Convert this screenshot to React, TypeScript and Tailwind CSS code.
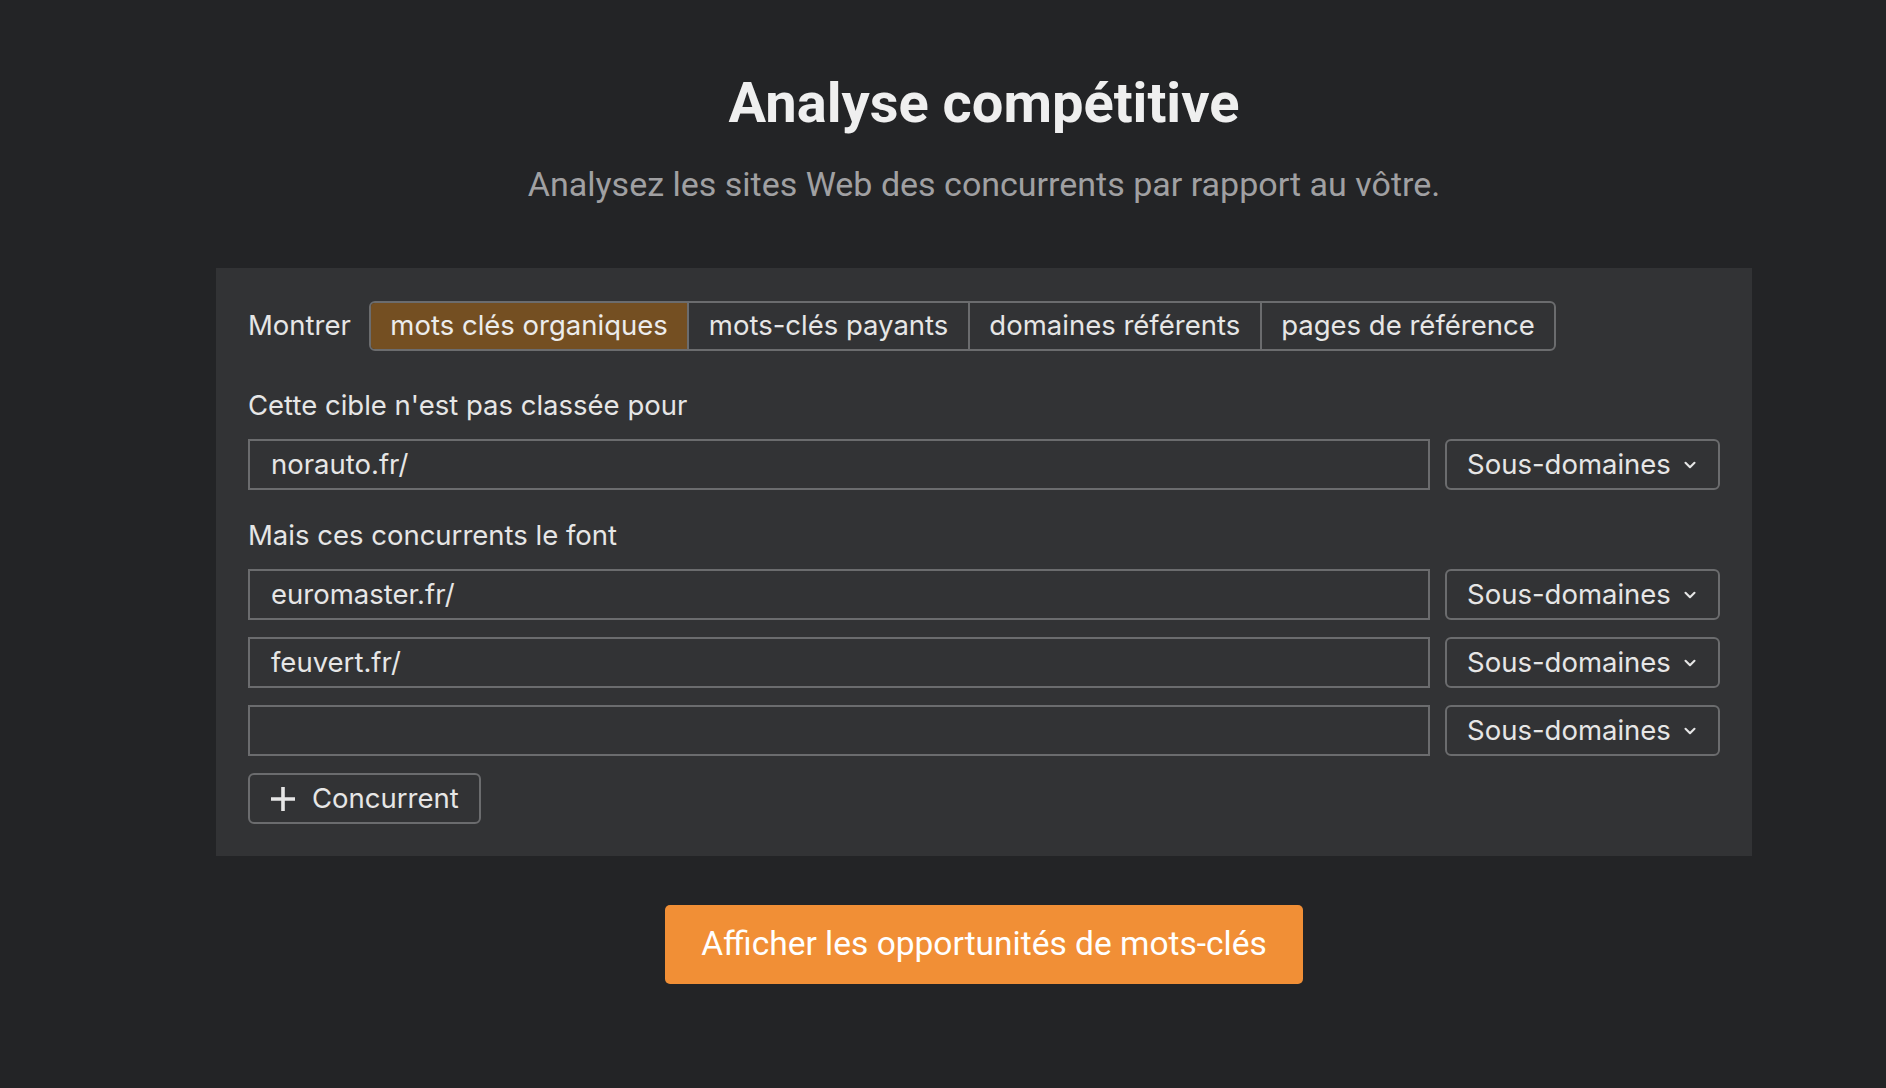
import { ChevronDown } from 'lucide-react';

const tabs = ['mots clés organiques', 'mots-clés payants', 'domaines référents', 'pages de référence'];

const competitors = ['euromaster.fr/', 'feuvert.fr/', ''];

function SubdomainSelect() {
  return (
    <button className="flex h-[51px] w-[275px] shrink-0 items-center justify-between rounded-[6px] border-2 border-[#6b6c6e] pl-[20px] pr-[19px] text-[27.5px] text-[#e6e6e6]">
      <span>Sous-domaines</span>
      <ChevronDown className="h-[18px] w-[18px]" strokeWidth={2.8} />
    </button>
  );
}

function TargetRow({ value }: { value: string }) {
  return (
    <div className="flex gap-[15px]">
      <div className="flex h-[51px] flex-1 items-center border-2 border-[#6b6c6e] px-[21px] text-[27.5px] text-[#e6e6e6]">
        {value}
      </div>
      <SubdomainSelect />
    </div>
  );
}

export default function App() {
  return (
    <div className="flex min-h-[1088px] w-full flex-col items-center bg-[#232426] pl-[82px] pt-[72px] font-['Inter',sans-serif]">
      {/* Header */}
      <h1 className="font-['Roboto',sans-serif] text-[56px] font-bold leading-[62px] text-[#efefef]">Analyse compétitive</h1>
      <p className="mt-[30px] font-['Roboto',sans-serif] text-[34px] leading-[40px] text-[#a0a0a2]">
        Analysez les sites Web des concurrents par rapport au vôtre.
      </p>

      {/* Panel */}
      <section className="mt-[64px] w-[1536px] bg-[#323335] px-[32px] pb-[32px] pt-[33px]">
        <div className="flex items-center">
          <span className="mr-[18px] text-[27.5px] text-[#e6e6e6]">Montrer</span>
          <div className="flex h-[50px] overflow-hidden rounded-[6px] border-2 border-[#6b6c6e]">
            {tabs.map((tab, i) => (
              <div
                key={tab}
                className={
                  i === 0
                    ? 'flex items-center bg-[#744f22] px-[19.5px] text-[27.5px] text-[#ececec]'
                    : 'flex items-center border-l-2 border-[#6b6c6e] px-[19.5px] text-[27.5px] text-[#e6e6e6]'
                }
              >
                {tab}
              </div>
            ))}
          </div>
        </div>

        <p className="mt-[38px] text-[27.5px] leading-[32px] text-[#e6e6e6]">Cette cible n'est pas classée pour</p>
        <div className="mt-[18px]">
          <TargetRow value="norauto.fr/" />
        </div>

        <p className="mt-[29px] text-[27.5px] leading-[32px] text-[#e6e6e6]">Mais ces concurrents le font</p>
        <div className="mt-[18px] flex flex-col gap-[17px]">
          {competitors.map((c, i) => (
            <TargetRow key={i} value={c} />
          ))}
          <button className="flex h-[51px] w-[233px] items-center gap-[17px] rounded-[6px] border-2 border-[#6b6c6e] pl-[21px] text-[27.5px] text-[#e6e6e6]">
            <svg viewBox="0 0 24 24" className="h-[24px] w-[24px] shrink-0" stroke="currentColor" strokeWidth={3.6} fill="none">
              <path d="M12 0v24M0 12h24" />
            </svg>
            Concurrent
          </button>
        </div>
      </section>

      {/* CTA */}
      <button className="mt-[49px] h-[79px] w-[638px] rounded-[5px] bg-[#f18f36] font-['Roboto',sans-serif] text-[33.5px] text-white">
        Afficher les opportunités de mots-clés
      </button>
    </div>
  );
}
